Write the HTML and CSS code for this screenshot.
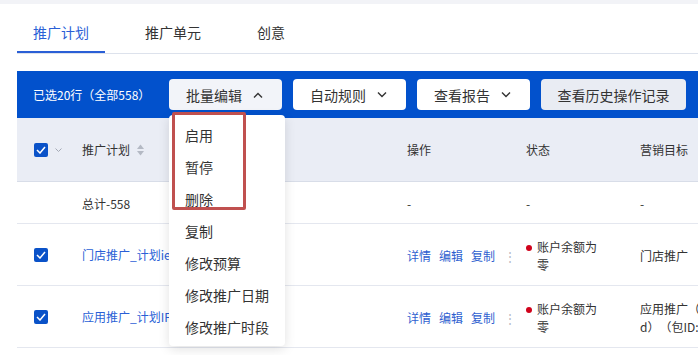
FILE: index.html
```html
<!DOCTYPE html>
<html lang="zh-CN">
<head>
    <meta charset="UTF-8">
    <title>推广计划</title>
    <link rel="stylesheet" href="styles.css">
</head>
<body>
    <div class="top-strip"></div>
    <div class="main">
        <nav class="tabs">
            <div class="tab active">推广计划</div>
            <div class="tab">推广单元</div>
            <div class="tab">创意</div>
        </nav>

        <div class="batch-bar">
            <span class="selected-info">已选20行（全部558）</span>
            <div class="btn-wrap">
                <button class="btn btn-open">批量编辑
                    <svg width="10" height="6" viewBox="0 0 10 6"><polyline points="1,5.5 5,1.5 9,5.5" fill="none" stroke="#333" stroke-width="1.4"/></svg>
                </button>
                <div class="dropdown">
                    <div class="dd-item">启用</div>
                    <div class="dd-item">暂停</div>
                    <div class="dd-item">删除</div>
                    <div class="dd-item">复制</div>
                    <div class="dd-item">修改预算</div>
                    <div class="dd-item">修改推广日期</div>
                    <div class="dd-item">修改推广时段</div>
                    <div class="highlight"></div>
                </div>
            </div>
            <button class="btn">自动规则
                <svg width="10" height="6" viewBox="0 0 10 6"><polyline points="1,0.5 5,4.5 9,0.5" fill="none" stroke="#333" stroke-width="1.4"/></svg>
            </button>
            <button class="btn">查看报告
                <svg width="10" height="6" viewBox="0 0 10 6"><polyline points="1,0.5 5,4.5 9,0.5" fill="none" stroke="#333" stroke-width="1.4"/></svg>
            </button>
            <button class="btn btn-gray">查看历史操作记录</button>
        </div>

        <div class="table">
            <div class="row head">
                <div class="cell check-cell">
                    <span class="checkbox"><svg width="10" height="8" viewBox="0 0 10 8"><polyline points="1,4 4,7 9,1" fill="none" stroke="#fff" stroke-width="1.5"/></svg></span>
                    <svg class="caret" width="7" height="4" viewBox="0 0 7 4"><polyline points="0.5,0.5 3.5,3.5 6.5,0.5" fill="none" stroke="#a4a9b5" stroke-width="1"/></svg>
                </div>
                <div class="cell">推广计划
                    <svg class="sort" width="7" height="12" viewBox="0 0 7 12"><polygon points="3.5,0.5 7,5 0,5" fill="#b4b9c4"/><polygon points="0,7 7,7 3.5,11.5" fill="#b4b9c4"/></svg>
                </div>
                <div class="cell">操作</div>
                <div class="cell">状态</div>
                <div class="cell">营销目标</div>
            </div>

            <div class="row total">
                <div class="cell"></div>
                <div class="cell">总计-558</div>
                <div class="cell">-</div>
                <div class="cell">-</div>
                <div class="cell">-</div>
            </div>

            <div class="row item">
                <div class="cell check-cell">
                    <span class="checkbox"><svg width="10" height="8" viewBox="0 0 10 8"><polyline points="1,4 4,7 9,1" fill="none" stroke="#fff" stroke-width="1.5"/></svg></span>
                </div>
                <div class="cell link">门店推广_计划ie7f3a_0612</div>
                <div class="cell actions">
                    <a>详情</a><a>编辑</a><a>复制</a><span class="more">⋮</span>
                </div>
                <div class="cell status"><span class="dot"></span><span class="status-text">账户余额为零</span></div>
                <div class="cell goal">门店推广</div>
            </div>

            <div class="row item">
                <div class="cell check-cell">
                    <span class="checkbox"><svg width="10" height="8" viewBox="0 0 10 8"><polyline points="1,4 4,7 9,1" fill="none" stroke="#fff" stroke-width="1.5"/></svg></span>
                </div>
                <div class="cell link">应用推广_计划IPX_0612</div>
                <div class="cell actions">
                    <a>详情</a><a>编辑</a><a>复制</a><span class="more">⋮</span>
                </div>
                <div class="cell status"><span class="dot"></span><span class="status-text">账户余额为零</span></div>
                <div class="cell goal">应用推广（应用名称<br>d）（包ID:com.demo.app）</div>
            </div>
        </div>
    </div>
</body>
</html>
```

FILE: styles.css
```css
* {
    margin: 0;
    padding: 0;
    box-sizing: border-box;
}

body {
    font-family: "Noto Sans CJK SC", "Noto Sans", sans-serif;
    background: #fff;
    color: #333;
    width: 698px;
    height: 355px;
    overflow: hidden;
    text-spacing-trim: space-all;
}

.top-strip {
    height: 4px;
    background: #f2f3f7;
}

.main {
    margin-left: 17px;
}

/* tabs */
.tabs {
    display: flex;
    gap: 24px;
    border-bottom: 1px solid #dde2ec;
    height: 50px;
}

.tab {
    font-size: 14px;
    line-height: 22px;
    padding: 17px 16px 9px;
    color: #333;
}

.tab.active {
    color: #2a5fd6;
    border-bottom: 2px solid #2a5fd6;
}

/* batch bar */
.batch-bar {
    margin-top: 17px;
    height: 47px;
    background: #0251cc;
    display: flex;
    align-items: center;
    gap: 11px;
    padding-left: 16px;
}

.selected-info {
    width: 125px;
    color: #fff;
    font-size: 12px;
    white-space: nowrap;
}

.btn-wrap {
    position: relative;
}

.btn {
    flex: none;
    width: 113px;
    height: 31px;
    padding: 0 19px 0 17px;
    border: none;
    border-radius: 4px;
    background: #fff;
    color: #333;
    font-family: inherit;
    font-size: 14px;
    white-space: nowrap;
    display: flex;
    align-items: center;
    justify-content: space-between;
}

.btn-open {
    background: #f2f4f9;
}

.btn-gray {
    width: 145px;
    padding: 0;
    justify-content: center;
    background: #e9ecf3;
}

/* dropdown */
.dropdown {
    position: absolute;
    top: 36px;
    left: 0;
    width: 116px;
    padding: 4px 0 3px;
    background: #fff;
    border-radius: 4px;
    box-shadow: 0 3px 12px rgba(0, 0, 0, 0.12);
    z-index: 10;
}

.dd-item {
    height: 32px;
    line-height: 32px;
    padding-left: 16px;
    font-size: 14px;
    color: #333;
}

.highlight {
    position: absolute;
    left: 3px;
    top: -3px;
    width: 74px;
    height: 98px;
    border: 3px solid #c0504f;
    border-radius: 2px;
}

/* table */
.row {
    display: grid;
    grid-template-columns: 48px 325px 119px 114px 1fr;
    padding-left: 17px;
    align-items: center;
    font-size: 12px;
    border-bottom: 1px solid #e4e7ef;
}

.row.head {
    height: 64px;
    background: #eaedf5;
    border-bottom-color: #d8dde8;
}

.row.total {
    height: 42px;
    padding-top: 2px;
}

.row.item {
    height: 62px;
}

.cell {
    white-space: nowrap;
    display: flex;
    align-items: center;
}

.check-cell {
    gap: 7px;
}

.checkbox {
    width: 14px;
    height: 14px;
    border-radius: 2px;
    background: #0a52c8;
    display: flex;
    align-items: center;
    justify-content: center;
}

.sort {
    margin-left: 7px;
}

.link {
    color: #2a5fd6;
}

.actions {
    gap: 8px;
    padding-top: 2px;
}

.actions a {
    color: #2f5fd0;
}

.more {
    color: #b4b9c4;
    margin-left: 1px;
}

.status {
    align-items: flex-start;
    padding-top: 2px;
}

.dot {
    width: 6px;
    height: 6px;
    border-radius: 50%;
    background: #d0021b;
    margin: 7px 5px 0 0;
}

.status-text {
    white-space: normal;
    width: 62px;
    line-height: 18px;
}

.goal {
    display: block;
    line-height: 18px;
    padding-top: 2px;
}
```
